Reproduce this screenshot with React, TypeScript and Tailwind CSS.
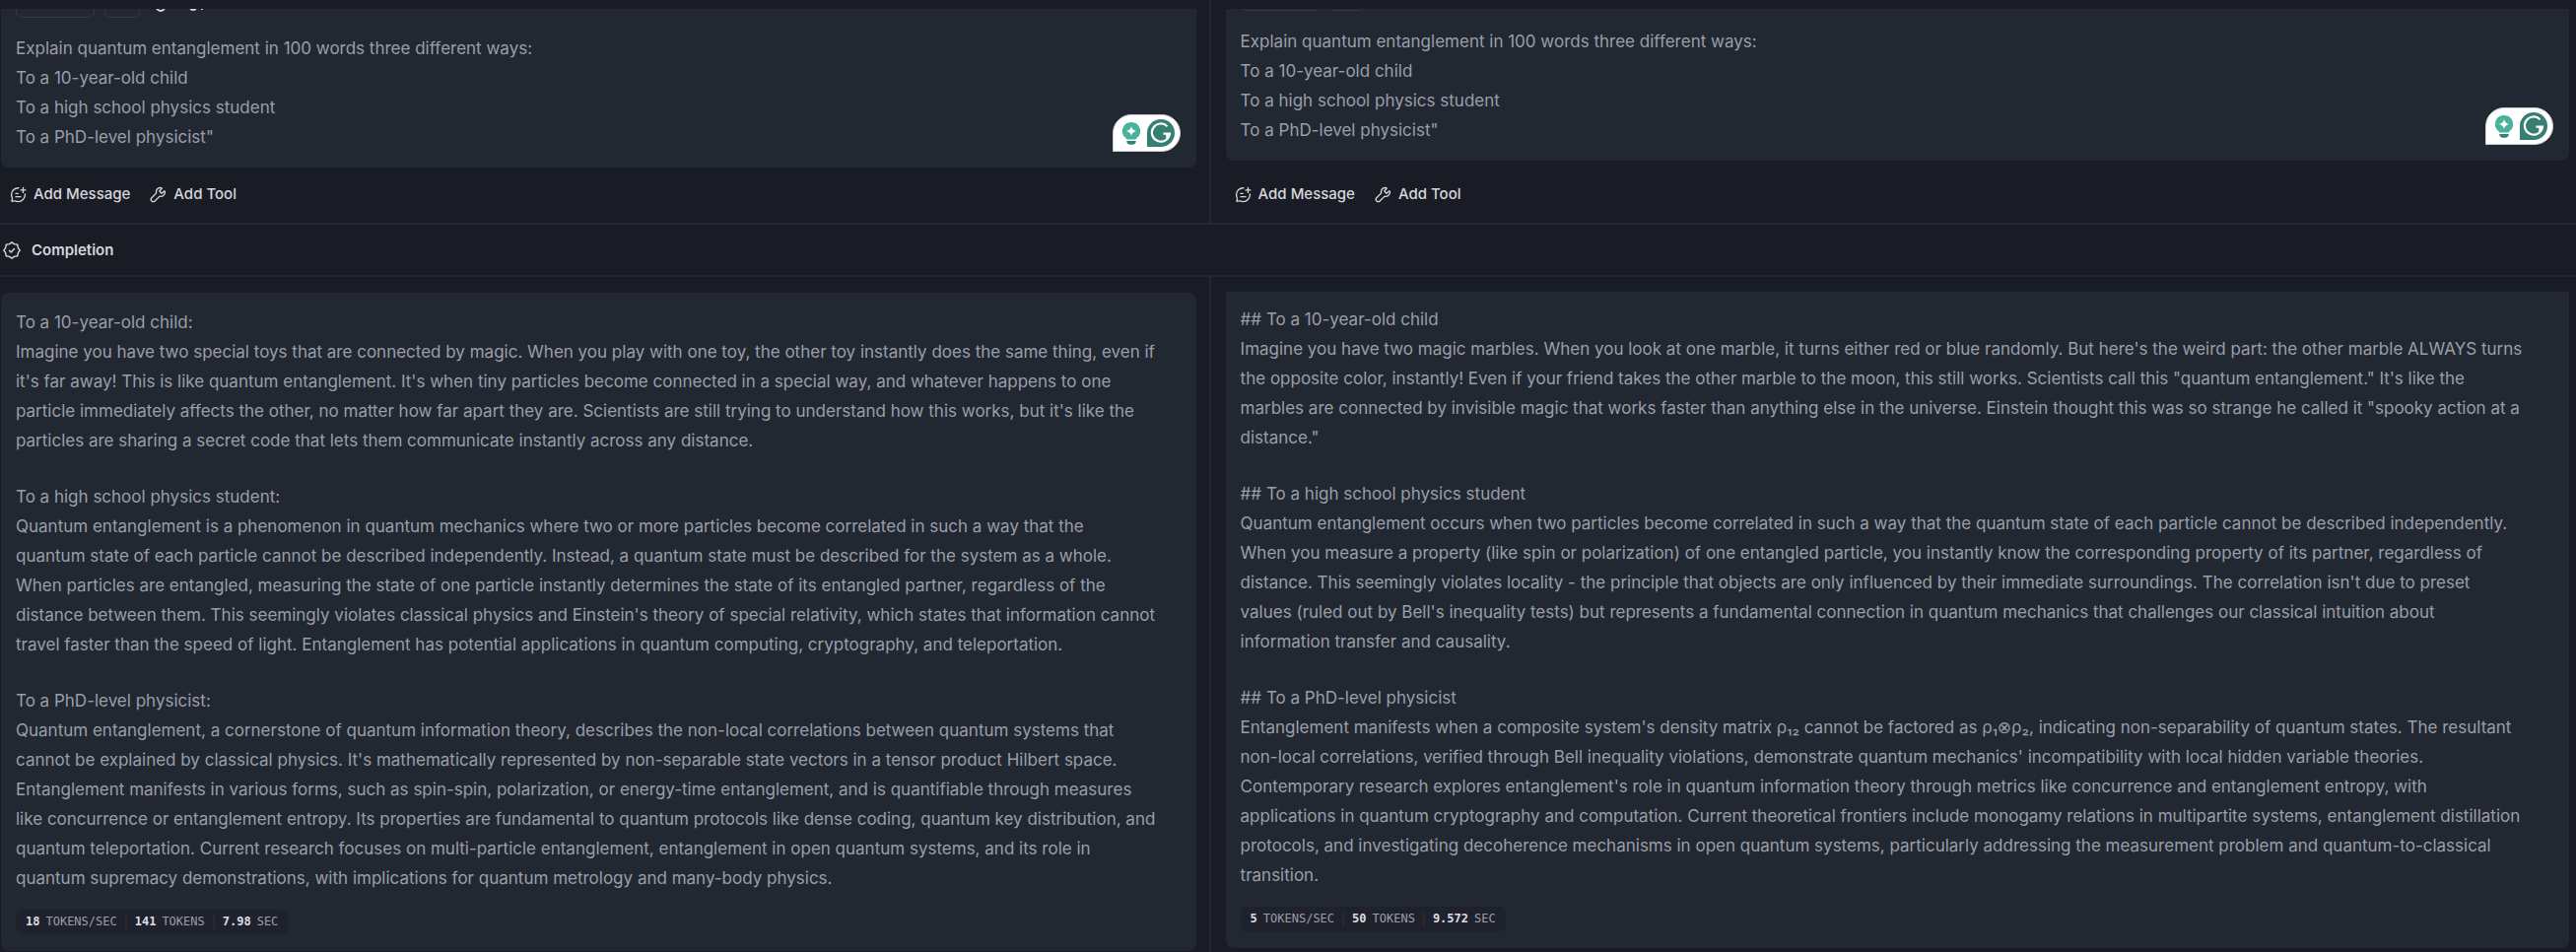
import React from 'react';
import clsx from 'clsx';

const PROMPT = `Explain quantum entanglement in 100 words three different ways:
To a 10-year-old child
To a high school physics student
To a PhD-level physicist"`;

interface Stat {
  value: string;
  unit: string;
}

interface Run {
  id: string;
  paragraphs: string[];
  stats: Stat[];
}

const LEFT_RUN: Run = {
  id: 'left',
  paragraphs: [
    `To a 10-year-old child:
Imagine you have two special toys that are connected by magic. When you play with one toy, the other toy instantly does the same thing, even if
it's far away! This is like quantum entanglement. It's when tiny particles become connected in a special way, and whatever happens to one
particle immediately affects the other, no matter how far apart they are. Scientists are still trying to understand how this works, but it's like the
particles are sharing a secret code that lets them communicate instantly across any distance.`,
    `To a high school physics student:
Quantum entanglement is a phenomenon in quantum mechanics where two or more particles become correlated in such a way that the
quantum state of each particle cannot be described independently. Instead, a quantum state must be described for the system as a whole.
When particles are entangled, measuring the state of one particle instantly determines the state of its entangled partner, regardless of the
distance between them. This seemingly violates classical physics and Einstein's theory of special relativity, which states that information cannot
travel faster than the speed of light. Entanglement has potential applications in quantum computing, cryptography, and teleportation.`,
    `To a PhD-level physicist:
Quantum entanglement, a cornerstone of quantum information theory, describes the non-local correlations between quantum systems that
cannot be explained by classical physics. It's mathematically represented by non-separable state vectors in a tensor product Hilbert space.
Entanglement manifests in various forms, such as spin-spin, polarization, or energy-time entanglement, and is quantifiable through measures
like concurrence or entanglement entropy. Its properties are fundamental to quantum protocols like dense coding, quantum key distribution, and
quantum teleportation. Current research focuses on multi-particle entanglement, entanglement in open quantum systems, and its role in
quantum supremacy demonstrations, with implications for quantum metrology and many-body physics.`,
  ],
  stats: [
    { value: '18', unit: 'TOKENS/SEC' },
    { value: '141', unit: 'TOKENS' },
    { value: '7.98', unit: 'SEC' },
  ],
};

const RIGHT_RUN: Run = {
  id: 'right',
  paragraphs: [
    `## To a 10-year-old child
Imagine you have two magic marbles. When you look at one marble, it turns either red or blue randomly. But here's the weird part: the other marble ALWAYS turns
the opposite color, instantly! Even if your friend takes the other marble to the moon, this still works. Scientists call this "quantum entanglement." It's like the
marbles are connected by invisible magic that works faster than anything else in the universe. Einstein thought this was so strange he called it "spooky action at a
distance."`,
    `## To a high school physics student
Quantum entanglement occurs when two particles become correlated in such a way that the quantum state of each particle cannot be described independently.
When you measure a property (like spin or polarization) of one entangled particle, you instantly know the corresponding property of its partner, regardless of
distance. This seemingly violates locality - the principle that objects are only influenced by their immediate surroundings. The correlation isn't due to preset
values (ruled out by Bell's inequality tests) but represents a fundamental connection in quantum mechanics that challenges our classical intuition about
information transfer and causality.`,
    `## To a PhD-level physicist
Entanglement manifests when a composite system's density matrix ρ₁₂ cannot be factored as ρ₁⊗ρ₂, indicating non-separability of quantum states. The resultant
non-local correlations, verified through Bell inequality violations, demonstrate quantum mechanics' incompatibility with local hidden variable theories.
Contemporary research explores entanglement's role in quantum information theory through metrics like concurrence and entanglement entropy, with
applications in quantum cryptography and computation. Current theoretical frontiers include monogamy relations in multipartite systems, entanglement distillation
protocols, and investigating decoherence mechanisms in open quantum systems, particularly addressing the measurement problem and quantum-to-classical
transition.`,
  ],
  stats: [
    { value: '5', unit: 'TOKENS/SEC' },
    { value: '50', unit: 'TOKENS' },
    { value: '9.572', unit: 'SEC' },
  ],
};

function AddMessageIcon() {
  return (
    <svg viewBox="0 0 24 24" className="size-[17px]" fill="none" stroke="currentColor" strokeWidth="1.9" strokeLinecap="round" strokeLinejoin="round" aria-hidden="true">
      <path d="M12.5 2.5C7 2.3 2.2 6.5 2.2 12c0 1.7.4 3.2 1.1 4.6.3.5.3 1 .2 1.5l-.8 3.4 3.7-.6c.4-.1.8 0 1.2.2 1.3.6 2.8.9 4.3.9 5.5 0 9.9-4.4 9.9-9.9v-.8" />
      <path d="M19 2v7M15.5 5.5h7" />
      <path d="M8.5 10.5h3M8.5 15h7" />
    </svg>
  );
}

function ToolIcon() {
  return (
    <svg viewBox="0 0 24 24" className="size-[17px]" fill="none" stroke="currentColor" strokeWidth="1.9" strokeLinecap="round" strokeLinejoin="round" aria-hidden="true">
      <path d="M20.4 7.1 17 10.2 13.8 7 16.9 3.6c.4-.4.2-1-.3-1.2-2.3-.6-4.7.1-6.2 1.9-1.3 1.6-1.5 3.5-1 5.4L2.7 16.5c-1.3 1.3-1.3 3.3 0 4.6s3.3 1.3 4.6 0l6.9-6.8c1.9.6 4 .2 5.5-1.2 1.7-1.6 2.4-3.7 1.9-5.7-.1-.6-.8-.7-1.2-.3z" />
    </svg>
  );
}

function CompletionIcon() {
  return (
    <svg viewBox="0 0 24 24" className="size-5" fill="none" stroke="currentColor" strokeWidth="1.7" strokeLinecap="round" strokeLinejoin="round" aria-hidden="true">
      <path d="M12 2.2 14.9 4.3 18.9 5.1 19.7 9.1 21.8 12 19.7 14.9 18.9 18.9 14.9 19.7 12 21.8 9.1 19.7 5.1 18.9 4.3 14.9 2.2 12 4.3 9.1 5.1 5.1 9.1 4.3z" />
      <path d="m9 12.3 2 2 4-4.2" />
    </svg>
  );
}

function AssistantBadge() {
  return (
    <div className="absolute right-4 bottom-4 flex h-[38px] items-center gap-[7px] rounded-t-full rounded-br-full border border-[#cfcfda] bg-white pr-[5px] pl-[9px]">
      <svg viewBox="0 0 18 24" className="h-6 w-[18px]" aria-hidden="true">
        <path d="M9 1a9 9 0 0 1 5.5 16.2c-.5.4-.8.8-.8 1.2H4.3c0-.4-.3-.8-.8-1.2A9 9 0 0 1 9 1z" fill="#47b39c" />
        <path d="M4.2 20h9.6c0 2.2-1.6 3.8-3.8 3.8H8c-2.2 0-3.8-1.6-3.8-3.8z" fill="#2f8573" />
        <path d="M9 5c.7 3 2 4.3 5 5-3 .7-4.3 2-5 5-.7-3-2-4.3-5-5 3-.7 4.3-2 5-5z" fill="#fff" />
      </svg>
      <svg viewBox="0 0 28 28" className="size-7" aria-hidden="true">
        <path d="M14 0a14 14 0 1 1 0 28H0V14A14 14 0 0 1 14 0z" fill="#377f70" />
        <path d="M20.5 7.2A9.1 9.1 0 1 0 23 14.7h-6.5M23 14.7l-2.6-.1v4.5" fill="none" stroke="#fff" strokeWidth="2.2" />
      </svg>
    </div>
  );
}

function Prompt({ className, children }: { className: string; children?: React.ReactNode }) {
  return (
    <div className={clsx('flex flex-col justify-end overflow-hidden', className)}>
      <div className="relative rounded-lg bg-[#222832] px-[15px] pt-4 pb-4">
        <div className="mb-4 flex h-[30px] items-center">
          <div className="mr-[10px] h-full w-20 rounded-md border border-[#343946]" />
          <div className="h-full w-9 rounded-md border border-[#343946]" />
          {children}
        </div>
        <p className="whitespace-pre">{PROMPT}</p>
        <AssistantBadge />
      </div>
    </div>
  );
}

function Actions() {
  return (
    <div className="flex gap-5 px-[9px] text-[15px] leading-6 font-medium text-[#d5d6dc]">
      <button type="button" className="flex items-center gap-[7px]">
        <AddMessageIcon />
        Add Message
      </button>
      <button type="button" className="flex items-center gap-[7px]">
        <ToolIcon />
        Add Tool
      </button>
    </div>
  );
}

function Stats({ stats }: { stats: Stat[] }) {
  return (
    <div className="mt-[17px] flex w-fit items-center rounded-md bg-[#1f222c] px-[2px] py-[5px] font-['DejaVu_Sans_Mono',monospace] text-xs leading-[15px]">
      {stats.map((stat, i) => (
        <div key={stat.unit} className={clsx('flex gap-[6px] px-2', i > 0 && 'border-l-2 border-[#262a35]')}>
          <span className="font-bold text-[#dcdde2]">{stat.value}</span>
          <span>{stat.unit}</span>
        </div>
      ))}
    </div>
  );
}

// Inter's own ⊗ is oversized, so the operator is set in another face.
function Line({ text }: { text: string }) {
  return (
    <span className="flex whitespace-pre">
      {text.split('⊗').map((part, i) => (
        <React.Fragment key={i}>
          {i > 0 && <span className="font-['DejaVu_Sans',sans-serif]">⊗</span>}
          <span>{part}</span>
        </React.Fragment>
      ))}
    </span>
  );
}

function Output({ run, className }: { run: Run; className: string }) {
  return (
    <article className={clsx('bg-[#222832] px-[15px]', className)}>
      <div className="space-y-[27px]">
        {run.paragraphs.map((text) => (
          <p key={text}>
            {text.split('\n').map((line) => (
              <Line key={line} text={line} />
            ))}
          </p>
        ))}
      </div>
      <Stats stats={run.stats} />
    </article>
  );
}

export default function App() {
  return (
    <main className="min-h-screen overflow-hidden bg-[#1a1c25] font-['Inter',sans-serif] text-[17px] leading-[30px] text-[#9b9ea8]">
      <div className="flex border-b-2 border-[#242732]">
        <section className="w-[47%] border-r-2 border-[#242732] pt-[9px] pr-[13px] pb-[17px] pl-px">
          <Prompt className="h-[161px]">
            <svg viewBox="0 0 54 18" className="ml-3 h-[18px] w-[54px]" fill="none" stroke="#d5d6dc" strokeWidth="2" aria-hidden="true">
              <circle cx="9" cy="13" r="4" />
              <circle cx="42" cy="13" r="3" />
              <path d="M51 8v8" />
            </svg>
          </Prompt>
          <div className="pt-[15px]">
            <Actions />
          </div>
        </section>
        <section className="flex-1 pt-[9px] pr-[7px] pb-[17px] pl-[15px]">
          <Prompt className="h-[154px]" />
          <div className="pt-[22px]">
            <Actions />
          </div>
        </section>
      </div>
      <h2 className="flex h-[53px] items-center gap-[10px] border-b-2 border-[#242732] px-[2px] text-[15px] font-semibold text-[#d5d6dc]">
        <CompletionIcon />
        Completion
      </h2>
      <div className="flex">
        <section className="w-[47%] border-r-2 border-[#242732] pt-4 pr-[13px] pb-1 pl-px">
          <Output run={LEFT_RUN} className="rounded-lg pt-[15px] pb-[17px]" />
        </section>
        <section className="flex-1 pt-[15px] pr-[7px] pb-1 pl-[15px]">
          <Output run={RIGHT_RUN} className="rounded-b-lg pt-[13px] pb-[17px]" />
        </section>
      </div>
    </main>
  );
}
